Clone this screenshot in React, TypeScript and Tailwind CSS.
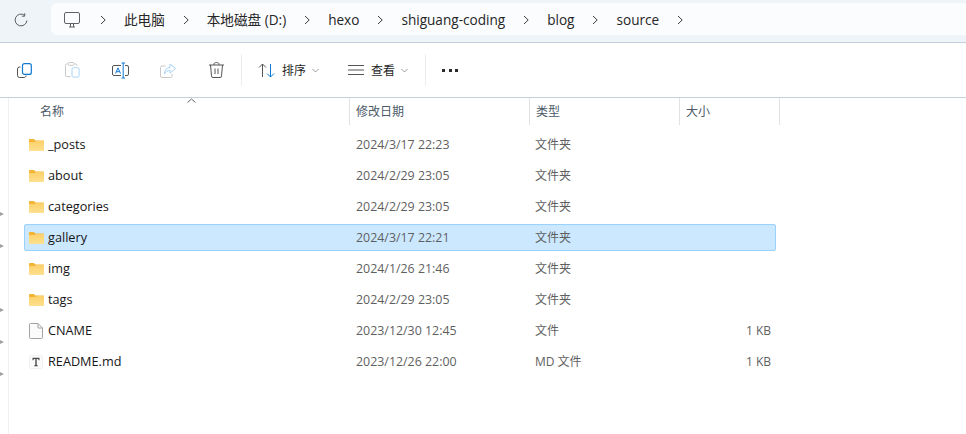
const font = { fontFamily: '"Open Sans","Noto Sans CJK SC",sans-serif' };

const Chevron = () => (
  <svg width="8" height="10" viewBox="0 0 8 10" fill="none" stroke="#3d3d3d" strokeWidth="1" className="shrink-0 mt-[1px]">
    <path d="M2 1l4.200 4L2 9" />
  </svg>
);

const crumbs = ["此电脑", "本地磁盘 (D:)", "hexo", "shiguang-coding", "blog", "source"];

function Folder() {
  return (
    <svg width="15" height="12" viewBox="0 0 15 12" className="shrink-0">
      <defs>
        <linearGradient id="fb" x1="0" y1="0" x2="0" y2="1">
          <stop offset="0" stopColor="#fbd06a" />
          <stop offset="1" stopColor="#fee08f" />
        </linearGradient>
      </defs>
      <path d="M0 1C0 .4.400 0 1 0h3.800l1.700 1.500H14c.6 0 1 .4 1 1V4H0z" fill="#f3b634" />
      <path d="M0 3h6l1-1h8v9c0 .6-.4 1-1 1H1c-.6 0-1-.4-1-1z" fill="url(#fb)" />
    </svg>
  );
}

function FileIcon() {
  return (
    <svg width="14" height="16" viewBox="0 0 14 16" fill="#fbfbfb" stroke="#a2a2a2" strokeWidth="1" className="shrink-0">
      <path d="M.5 1.500a1 1 0 011-1h7.500l4.500 4.500v9.500a1 1 0 01-1 1h-11a1 1 0 01-1-1z" />
      <path d="M9 .5v4.500h4.500" fill="none" />
    </svg>
  );
}

function TextIcon() {
  return (
    <svg width="14" height="14" viewBox="0 0 14 14" className="shrink-0">
      <rect x="0.500" y="0.500" width="13" height="13" rx="2" fill="#fbfbfb" stroke="#f0f0f0" />
      <path d="M3.500 2.800h7v2.400h-.9l-.5-1.300H7.700v6.100l1.100.4v.8H5.200v-.8l1.100-.4V3.900H4.900l-.5 1.300h-.9z" fill="#4a4a4a" />
    </svg>
  );
}

const rows = [
  { n: "_posts", d: "2024/3/17 22:23", t: "文件夹", s: "", i: "f" },
  { n: "about", d: "2024/2/29 23:05", t: "文件夹", s: "", i: "f" },
  { n: "categories", d: "2024/2/29 23:05", t: "文件夹", s: "", i: "f" },
  { n: "gallery", d: "2024/3/17 22:21", t: "文件夹", s: "", i: "f", sel: true },
  { n: "img", d: "2024/1/26 21:46", t: "文件夹", s: "", i: "f" },
  { n: "tags", d: "2024/2/29 23:05", t: "文件夹", s: "", i: "f" },
  { n: "CNAME", d: "2023/12/30 12:45", t: "文件", s: "1 KB", i: "c" },
  { n: "README.md", d: "2023/12/26 22:00", t: "MD 文件", s: "1 KB", i: "t" },
];

function ToolSlot({ children }: { children: React.ReactNode }) {
  return <div className="w-12 flex items-center justify-center">{children}</div>;
}

export default function App() {
  return (
    <div className="w-[966px] h-[434px] bg-white overflow-hidden flex flex-col text-[13px] text-[#1a1a1a]" style={font}>
      {/* address row */}
      <div className="h-[43px] shrink-0 bg-[#eff4f9] border-b border-[#c3cfdc] flex items-start pt-[3px] pl-[14px]">
        <div className="w-[37px] h-[32px] flex items-center">
          <svg width="14" height="14" viewBox="0 0 14 14" fill="none" stroke="#5c5c5c" strokeWidth="1" className="mt-[2px]">
            <path d="M12.900 7.500A5.900 5.900 0 1 1 10.600 2.300" />
            <path d="M10.700.3v2.900H7.900" />
          </svg>
        </div>
        <div className="flex-1 h-[32px] bg-[#fbfcfe] rounded-l-[6px] flex items-center pl-[13px] text-[13.600px]">
          <svg width="16" height="16" viewBox="0 0 16 16" fill="none" stroke="#5f6368" strokeWidth="1" className="mr-[19px] mt-[1px]">
            <rect x="0.500" y="0.500" width="15" height="11" rx="1.500" />
            <path d="M5 15h6M6.500 12v3M9.500 12v3" />
          </svg>
          {crumbs.map((c) => (
            <div key={c} className="flex items-center">
              <Chevron />
              <span className="mx-[17px] mt-[1px] text-[#262626] whitespace-nowrap leading-none">{c}</span>
            </div>
          ))}
          <Chevron />
        </div>
      </div>

      {/* toolbar */}
      <div className="h-[55px] shrink-0 border-b border-[#c6d0da] flex items-center">
        <ToolSlot>
          <svg width="15" height="15" viewBox="0 0 15 15" fill="none" strokeWidth="1">
            <path d="M3.500 4H2.500a2 2 0 00-2 2v6.500a2 2 0 002 2H7c1.200 0 2-.7 2-2" stroke="#555" />
            <rect x="5.500" y="0.600" width="8.800" height="10.800" rx="2" stroke="#0f78d4" strokeWidth="1.200" />
          </svg>
        </ToolSlot>
        <ToolSlot>
          <svg width="15" height="16" viewBox="0 0 16 17" fill="none" strokeWidth="1">
            <path d="M6 15.500H2A1.500 1.500 0 01.500 14V3.500A1.500 1.500 0 012 2h1M10 2h1a1.500 1.500 0 011.500 1.500V4" stroke="#c4c4c4" />
            <rect x="3.500" y="0.500" width="6" height="3" rx="1" stroke="#c4c4c4" />
            <rect x="7.500" y="6" width="7.500" height="10" rx="1.500" stroke="#a5d2f7" />
          </svg>
        </ToolSlot>
        <ToolSlot>
          <svg width="17" height="17" viewBox="0 0 17 17" fill="none" strokeWidth="1">
            <path d="M9 3.500H2A1.500 1.500 0 00.500 5v7A1.500 1.500 0 002 13.500h7M13 3.500h2A1.500 1.500 0 0116.500 5v7a1.500 1.500 0 01-1.500 1.500h-2" stroke="#555" />
            <path d="M9.500 1h3.500M9.500 16h3.500M11.200 1v15" stroke="#0f78d4" />
            <path d="M3.500 11.500L6 5.800l2.500 5.700M4.500 9.700h3" stroke="#0f78d4" />
          </svg>
        </ToolSlot>
        <ToolSlot>
          <svg width="16" height="15" viewBox="0 0 16 15" fill="none" strokeWidth="1">
            <path d="M5.500 3H2A1.500 1.500 0 00.500 4.500V13A1.500 1.500 0 002 14.500h8.500A1.500 1.500 0 0012 13v-2" stroke="#c8c8c8" />
            <path d="M10 1l5.500 4.500L10 10V7.500C7.500 7.500 5.500 8.500 4.500 11c0-4 2-6.300 5.500-6.500z" stroke="#a5d2f7" />
          </svg>
        </ToolSlot>
        <ToolSlot>
          <svg width="15" height="16" viewBox="0 0 15 16" fill="none" stroke="#555" strokeWidth="1">
            <path d="M0 3h15M5 3V2.200C5 1.200 5.800.5 7.500.5s2.500.7 2.500 1.700V3" />
            <path d="M1.500 3l1 10.800A1.500 1.500 0 004 15.500h7a1.500 1.500 0 001.500-1.700L13.500 3" />
            <path d="M6 6.500v5.500M9 6.500v5.500" />
          </svg>
        </ToolSlot>
        <div className="w-px h-[32px] bg-[#ececec] ml-[1px]" />
        <div className="flex items-center ml-[16px] text-[12px]">
          <svg width="17" height="15" viewBox="0 0 17 15" fill="none" strokeWidth="1">
            <path d="M1 4.500L4.500 1 8 4.500M4.500 1v13" stroke="#555" />
            <path d="M9 10.500l3.500 3.500 3.500-3.500M12.500 14V1" stroke="#0f78d4" />
          </svg>
          <span className="ml-[7px] mt-[1px] text-[#1f1f1f] leading-none">排序</span>
          <svg width="7" height="5" viewBox="0 0 7 5" fill="none" stroke="#9b9b9b" className="ml-[6px]">
            <path d="M.5 1l3 3 3-3" />
          </svg>
        </div>
        <div className="flex items-center ml-[29px] text-[12px]">
          <svg width="16" height="10" viewBox="0 0 16 10" fill="none" stroke="#555" strokeWidth="1">
            <path d="M0 .5h16M0 5h16M0 9.500h16" />
          </svg>
          <span className="ml-[7px] mt-[1px] text-[#1f1f1f] leading-none">查看</span>
          <svg width="7" height="5" viewBox="0 0 7 5" fill="none" stroke="#9b9b9b" className="ml-[6px]">
            <path d="M.5 1l3 3 3-3" />
          </svg>
        </div>
        <div className="w-px h-[32px] bg-[#ececec] ml-[17px]" />
        <div className="flex items-center gap-[3.500px] ml-[16px]">
          <span className="w-[3px] h-[3px] bg-[#2b2b2b]" />
          <span className="w-[3px] h-[3px] bg-[#2b2b2b]" />
          <span className="w-[3px] h-[3px] bg-[#2b2b2b]" />
        </div>
      </div>

      {/* body */}
      <div className="flex-1 flex min-h-0">
        <div className="w-[9px] shrink-0 border-r border-[#f0f0f0] flex flex-col items-start pt-[114px] gap-[28px]">
          {[0, 1, 2, 3, 4].map((i) => (
            <div key={i} className={`flex ${i === 2 ? "mt-[32px]" : ""}`}>
              <span className="w-0 h-0 border-y-[2px] border-y-transparent border-l-[4px] border-l-[#a0a0a0]" />
            </div>
          ))}
        </div>
        <div className="flex-1 min-w-0">
          {/* header */}
          <div className="relative h-[27px] flex text-[#4c5a69] text-[12px] leading-none">
            <div className="w-[341px] h-full border-r border-[#e2e2e2] pl-[31px] pt-[8px]">名称</div>
            <div className="w-[180px] h-full border-r border-[#e2e2e2] pl-[6px] pt-[8px]">修改日期</div>
            <div className="w-[150px] h-full border-r border-[#e2e2e2] pl-[6px] pt-[8px]">类型</div>
            <div className="w-[100px] h-full border-r border-[#e2e2e2] pl-[6px] pt-[8px]">大小</div>
            <svg width="9" height="5" viewBox="0 0 9 5" fill="none" stroke="#666" className="absolute left-[178px] top-[0px]">
              <path d="M.5 4.500l4-3.500 4 3.500" />
            </svg>
          </div>
          {/* rows */}
          <div className="flex flex-col gap-[4px] pt-[6px]">
            {rows.map((r) => (
              <div
                key={r.n}
                className={`h-[27px] w-[752px] ml-[15px] flex items-center border rounded-[2px] ${
                  r.sel ? "bg-[#cce8ff] border-[#99d1ff]" : "border-transparent"
                }`}
              >
                <div className="w-[19px] ml-[4px] flex items-center shrink-0">
                  {r.i === "f" ? <Folder /> : r.i === "c" ? <FileIcon /> : <TextIcon />}
                </div>
                <span className="w-[308px] shrink-0 text-[#161616] text-[12.700px] leading-none">{r.n}</span>
                <span className="w-[179px] shrink-0 text-[#5f5f5f] text-[12.400px] leading-none mt-[1px]">{r.d}</span>
                <span className="w-[100px] shrink-0 text-[#5f5f5f] text-[12px] leading-none mt-[1px]">{r.t}</span>
                <span className="w-[136px] shrink-0 text-right text-[#5f5f5f] text-[12px] leading-none mt-[1px]">{r.s}</span>
              </div>
            ))}
          </div>
        </div>
      </div>
    </div>
  );
}
